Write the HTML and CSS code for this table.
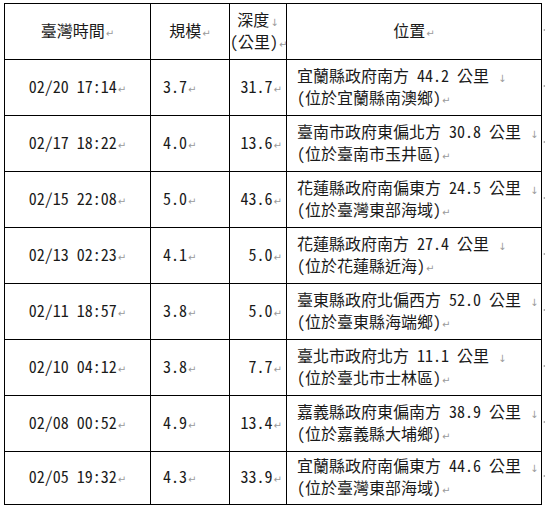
FILE: index.html
```html
<!DOCTYPE html>
<html>
<head>
<meta charset="utf-8">
<title>地震列表</title>
<link rel="stylesheet" href="styles.css">
</head>
<body>
<div class="page">
<table class="quakes">
<colgroup>
<col class="c-time"><col class="c-mag"><col class="c-depth"><col class="c-loc"><col class="c-end">
</colgroup>
<thead>
<tr class="head">
<th class="time">臺灣時間<span class="pm">↵</span></th>
<th class="mag-h">規模<span class="pm">↵</span></th>
<th class="depth-h">深度<span class="lb">↓</span><br>(公里)<span class="pm">↵</span></th>
<th class="loc-h">位置<span class="pm">↵</span></th>
<td class="end"><svg class="rowmark" viewBox="0 0 4 6" width="4" height="6"><path d="M3.5 0.5 V4 H0.8 M1.8 3 L0.8 4 L1.8 5" fill="none" stroke="#9a9a9a" stroke-width="0.8"/></svg></td>
</tr>
</thead>
<tbody>
<tr>
<td class="time">02/20 17:14<span class="pm">↵</span></td>
<td class="mag">3.7<span class="pm">↵</span></td>
<td class="depth">31.7<span class="pm">↵</span></td>
<td class="loc">宜蘭縣政府南方 44.2 公里 <span class="lb">↓</span><br>(位於宜蘭縣南澳鄉)<span class="pm">↵</span></td>
<td class="end"><svg class="rowmark" viewBox="0 0 4 6" width="4" height="6"><path d="M3.5 0.5 V4 H0.8 M1.8 3 L0.8 4 L1.8 5" fill="none" stroke="#9a9a9a" stroke-width="0.8"/></svg></td>
</tr>
<tr>
<td class="time">02/17 18:22<span class="pm">↵</span></td>
<td class="mag">4.0<span class="pm">↵</span></td>
<td class="depth">13.6<span class="pm">↵</span></td>
<td class="loc">臺南市政府東偏北方 30.8 公里 <span class="lb">↓</span><br>(位於臺南市玉井區)<span class="pm">↵</span></td>
<td class="end"><svg class="rowmark" viewBox="0 0 4 6" width="4" height="6"><path d="M3.5 0.5 V4 H0.8 M1.8 3 L0.8 4 L1.8 5" fill="none" stroke="#9a9a9a" stroke-width="0.8"/></svg></td>
</tr>
<tr>
<td class="time">02/15 22:08<span class="pm">↵</span></td>
<td class="mag">5.0<span class="pm">↵</span></td>
<td class="depth">43.6<span class="pm">↵</span></td>
<td class="loc">花蓮縣政府南偏東方 24.5 公里 <span class="lb">↓</span><br>(位於臺灣東部海域)<span class="pm">↵</span></td>
<td class="end"><svg class="rowmark" viewBox="0 0 4 6" width="4" height="6"><path d="M3.5 0.5 V4 H0.8 M1.8 3 L0.8 4 L1.8 5" fill="none" stroke="#9a9a9a" stroke-width="0.8"/></svg></td>
</tr>
<tr>
<td class="time">02/13 02:23<span class="pm">↵</span></td>
<td class="mag">4.1<span class="pm">↵</span></td>
<td class="depth">5.0<span class="pm">↵</span></td>
<td class="loc">花蓮縣政府南方 27.4 公里 <span class="lb">↓</span><br>(位於花蓮縣近海)<span class="pm">↵</span></td>
<td class="end"><svg class="rowmark" viewBox="0 0 4 6" width="4" height="6"><path d="M3.5 0.5 V4 H0.8 M1.8 3 L0.8 4 L1.8 5" fill="none" stroke="#9a9a9a" stroke-width="0.8"/></svg></td>
</tr>
<tr>
<td class="time">02/11 18:57<span class="pm">↵</span></td>
<td class="mag">3.8<span class="pm">↵</span></td>
<td class="depth">5.0<span class="pm">↵</span></td>
<td class="loc">臺東縣政府北偏西方 52.0 公里 <span class="lb">↓</span><br>(位於臺東縣海端鄉)<span class="pm">↵</span></td>
<td class="end"><svg class="rowmark" viewBox="0 0 4 6" width="4" height="6"><path d="M3.5 0.5 V4 H0.8 M1.8 3 L0.8 4 L1.8 5" fill="none" stroke="#9a9a9a" stroke-width="0.8"/></svg></td>
</tr>
<tr>
<td class="time">02/10 04:12<span class="pm">↵</span></td>
<td class="mag">3.8<span class="pm">↵</span></td>
<td class="depth">7.7<span class="pm">↵</span></td>
<td class="loc">臺北市政府北方 11.1 公里 <span class="lb">↓</span><br>(位於臺北市士林區)<span class="pm">↵</span></td>
<td class="end"><svg class="rowmark" viewBox="0 0 4 6" width="4" height="6"><path d="M3.5 0.5 V4 H0.8 M1.8 3 L0.8 4 L1.8 5" fill="none" stroke="#9a9a9a" stroke-width="0.8"/></svg></td>
</tr>
<tr>
<td class="time">02/08 00:52<span class="pm">↵</span></td>
<td class="mag">4.9<span class="pm">↵</span></td>
<td class="depth">13.4<span class="pm">↵</span></td>
<td class="loc">嘉義縣政府東偏南方 38.9 公里 <span class="lb">↓</span><br>(位於嘉義縣大埔鄉)<span class="pm">↵</span></td>
<td class="end"><svg class="rowmark" viewBox="0 0 4 6" width="4" height="6"><path d="M3.5 0.5 V4 H0.8 M1.8 3 L0.8 4 L1.8 5" fill="none" stroke="#9a9a9a" stroke-width="0.8"/></svg></td>
</tr>
<tr class="last">
<td class="time">02/05 19:32<span class="pm">↵</span></td>
<td class="mag">4.3<span class="pm">↵</span></td>
<td class="depth">33.9<span class="pm">↵</span></td>
<td class="loc">宜蘭縣政府南偏東方 44.6 公里 <span class="lb">↓</span><br>(位於臺灣東部海域)<span class="pm">↵</span></td>
<td class="end"><svg class="rowmark" viewBox="0 0 4 6" width="4" height="6"><path d="M3.5 0.5 V4 H0.8 M1.8 3 L0.8 4 L1.8 5" fill="none" stroke="#9a9a9a" stroke-width="0.8"/></svg></td>
</tr>
</tbody>
</table>
</div>
</body>
</html>
```

FILE: styles.css
```css
html, body {
  margin: 0;
  padding: 0;
  background: #ffffff;
}

body {
  font-family: "Noto Sans CJK TC", "Noto Sans CJK JP", sans-serif;
  font-size: 16px;
  color: #1a1a1a;
  font-feature-settings: "hwid";
}

.page {
  padding: 3px 0 0 4px;
}

.quakes {
  border-collapse: collapse;
  table-layout: fixed;
  width: 541px;
}

.c-time { width: 146px; }
.c-mag { width: 79px; }
.c-depth { width: 57px; }
.c-loc { width: 255px; }
.c-end { width: 4px; }

.quakes tr {
  height: 56px;
}

.quakes tr.last {
  height: 53px;
}

.quakes th,
.quakes td {
  border: 1px solid #000;
  padding: 0;
  vertical-align: middle;
  font-weight: normal;
  white-space: nowrap;
  line-height: 18px;
}

.quakes td.end {
  border: none;
  text-align: left;
  padding: 0 0 6px 1px;
  line-height: 6px;
}

.rowmark {
  display: block;
}

.time {
  text-align: center;
}

.mag-h,
.depth-h,
.loc-h {
  text-align: center;
}

.depth-h {
  line-height: 19px;
}

.mag {
  text-align: left;
  padding-left: 12px !important;
}

.depth {
  text-align: right;
  padding-right: 4px !important;
}

.loc {
  text-align: left;
  padding-left: 10px !important;
}

.pm,
.lb {
  color: #9a9a9a;
  font-size: 10px;
  font-family: "DejaVu Sans", sans-serif;
  margin-left: 1px;
}
```
